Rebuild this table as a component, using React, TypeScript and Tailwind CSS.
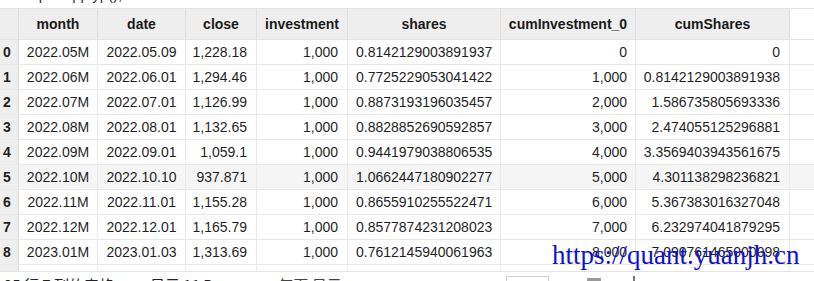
import React from "react";

const rows = [
  ["0", "2022.05M", "2022.05.09", "1,228.18", "1,000", "0.8142129003891937", "0", "0"],
  ["1", "2022.06M", "2022.06.01", "1,294.46", "1,000", "0.7725229053041422", "1,000", "0.8142129003891938"],
  ["2", "2022.07M", "2022.07.01", "1,126.99", "1,000", "0.8873193196035457", "2,000", "1.586735805693336"],
  ["3", "2022.08M", "2022.08.01", "1,132.65", "1,000", "0.8828852690592857", "3,000", "2.474055125296881"],
  ["4", "2022.09M", "2022.09.01", "1,059.1", "1,000", "0.9441979038806535", "4,000", "3.3569403943561675"],
  ["5", "2022.10M", "2022.10.10", "937.871", "1,000", "1.0662447180902277", "5,000", "4.301138298236821"],
  ["6", "2022.11M", "2022.11.01", "1,155.28", "1,000", "0.8655910255522471", "6,000", "5.367383016327048"],
  ["7", "2022.12M", "2022.12.01", "1,165.79", "1,000", "0.8577874231208023", "7,000", "6.232974041879295"],
  ["8", "2023.01M", "2023.01.03", "1,313.69", "1,000", "0.7612145940061963", "8,000", "7.090761465000098"],
  ["9", "2023.02M", "2023.02.01", "1,250.00", "1,000", "0.8", "9,000", "7.851976059006294"],
];

const headers = ["", "month", "date", "close", "investment", "shares", "cumInvestment_0", "cumShares"];
const widths = ["w-[19px]", "w-[79px]", "w-[88px]", "w-[71px]", "w-[91px]", "w-[153px]", "w-[135px]", "w-[154px]"];
const aligns = ["justify-start pl-[3px]", "justify-center", "justify-center", "justify-end pr-[9px]", "justify-end pr-[9px]", "justify-start pl-[8px]", "justify-end pr-[8px]", "justify-end pr-[9px]"];

export default function App() {
  return (
    <div
      className="relative w-[814px] h-[281px] overflow-hidden bg-white text-[#1f1f1f]"
      style={{ fontFamily: '"Liberation Sans", Arial, "Noto Sans CJK SC", sans-serif' }}
    >
      <div className="h-[8px] overflow-hidden">
        <div className="-mt-[14px] pl-[18px] text-[15px] leading-[18px] text-[#333]">output.applyp(),</div>
      </div>
      <div className="h-[264px] overflow-hidden border-y border-[#e3e3e3]">
        <div className="flex h-[31px] border-b border-[#e3e3e3]">
          {headers.map((h, i) => (
            <div
              key={i}
              className={`${widths[i]} shrink-0 flex items-center justify-center bg-[#eeeeee] border-r border-[#dedede] text-[14px] font-bold text-[#1a1a1a]`}
            >
              {h}
            </div>
          ))}
        </div>
        {rows.map((r, ri) => (
          <div key={ri} className={`flex h-[25px] border-b border-[#e8e8e8] ${ri === 5 ? "bg-[#f5f5f5]" : "bg-white"}`}>
            {r.map((c, ci) => (
              <div
                key={ci}
                className={`${widths[ci]} shrink-0 flex items-center ${aligns[ci]} border-r ${ci === 0 ? "bg-[#eeeeee] border-[#dcdcdc] font-bold" : "border-[#ebebeb]"} text-[14px] whitespace-nowrap`}
              >
                {c}
              </div>
            ))}
          </div>
        ))}
      </div>
      <div className="flex items-start h-[10px] mt-[4px] text-[15px] leading-[18px] text-[#222]" style={{ fontFamily: '"Noto Sans CJK SC", "Liberation Sans", sans-serif' }}>
        <span className="pl-[4px] w-[150px] shrink-0">25 行 7 列的表格</span>
        <span className="w-[110px] shrink-0">显示 11 P</span>
        <span className="w-[246px] shrink-0 text-[#444]">· 每页 显示</span>
        <span className="w-[43px] h-[14px] shrink-0 border border-[#cfcfcf]" />
        <span className="ml-[38px] mt-[2px] w-[14px] h-[10px] shrink-0 bg-[#9a9a9a]" />
        <span className="ml-[32px] w-[2px] h-[10px] shrink-0 bg-[#777]" />
      </div>
      <div
        className="absolute left-[552px] top-[242px] text-[27px] leading-none text-[#1010d0] whitespace-nowrap"
        style={{ fontFamily: '"Liberation Serif", "Times New Roman", serif' }}
      >
        https://quant.yuanjh.cn
      </div>
    </div>
  );
}
